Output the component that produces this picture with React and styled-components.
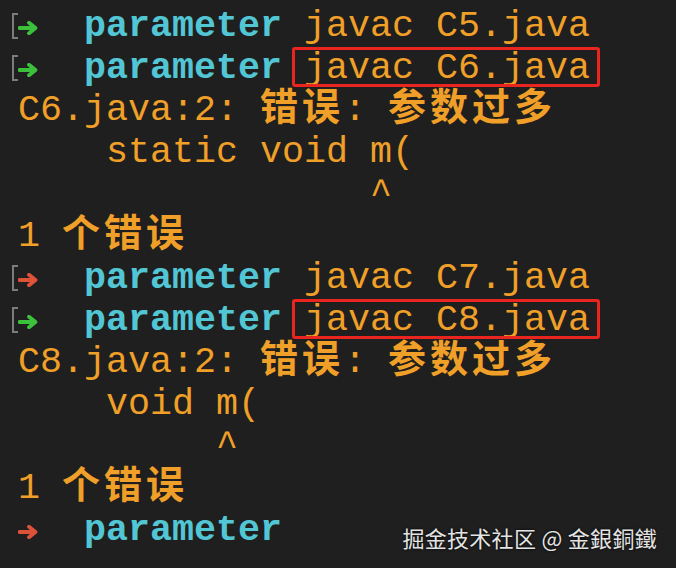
import styled, { createGlobalStyle, css } from "styled-components";

const GlobalStyle = createGlobalStyle`
	html, body {
		margin: 0;
		padding: 0;
		background: #1f1f1f;
	}
`;

const ORANGE = "#f0a028";
const TEAL = "#52c6d4";

function Arrow({ ok }) {
	const color = ok ? "#3cc13c" : "#dd5238";
	return (
		<ArrowSvg viewBox="0 0 22 14" width="22" height="14">
			<path
				d="M1.5 7 H16.5 M11 1.8 L17.5 7 L11 12.2"
				fill="none"
				stroke={color}
				strokeWidth="3.8"
				strokeLinecap="round"
				strokeLinejoin="round"
			/>
		</ArrowSvg>
	);
}

function Prompt({ ok, bracket, cmd, boxed }) {
	return (
		<Line $bracket={bracket}>
			<Arrow ok={ok} />
			{"  "}
			<Dir>parameter</Dir>
			{cmd && " "}
			{cmd && (boxed ? <Boxed>{cmd}</Boxed> : cmd)}
		</Line>
	);
}

function ErrorLine({ file }) {
	return (
		<Line>
			{file}.java:2: <Han>错误</Han>: <Han>参数过多</Han>
		</Line>
	);
}

export default function App() {
	return (
		<>
			<GlobalStyle />
			<Terminal>
				<Prompt ok bracket cmd="javac C5.java" />
				<Prompt ok bracket cmd="javac C6.java" boxed />
				<ErrorLine file="C6" />
				<Line>{"    static void m("}</Line>
				<Line>{"                ^"}</Line>
				<Line>
					1 <Han>个错误</Han>
				</Line>
				<Prompt bracket cmd="javac C7.java" />
				<Prompt ok bracket cmd="javac C8.java" boxed />
				<ErrorLine file="C8" />
				<Line>{"    void m("}</Line>
				<Line>{"         ^"}</Line>
				<Line>
					1 <Han>个错误</Han>
				</Line>
				<Prompt />
				<Watermark>掘金技术社区 @ 金銀銅鐵</Watermark>
			</Terminal>
		</>
	);
}

const Terminal = styled.div`
	position: relative;
	box-sizing: border-box;
	min-height: 100vh;
	padding: 5px 0 0 18px;
	background: #1f1f1f;
	color: ${ORANGE};
	font-family: "Liberation Mono", "Courier New", monospace;
	font-size: 36.66px;
	line-height: 42px;
	white-space: pre;
	overflow: hidden;
`;

const Line = styled.div`
	position: relative;
	height: 42px;

	${(props) =>
		props.$bracket &&
		css`
			&::before {
				content: "";
				position: absolute;
				left: -6px;
				top: 8px;
				width: 4px;
				height: 22px;
				border: 2px solid #7c7c7c;
				border-right: none;
			}
		`}
`;

const ArrowSvg = styled.svg`
	display: inline-block;
	vertical-align: 1px;
`;

const Dir = styled.span`
	color: ${TEAL};
	font-weight: bold;
`;

const Boxed = styled.span`
	position: relative;

	&::after {
		content: "";
		position: absolute;
		left: -12px;
		right: -10px;
		top: 0;
		bottom: 2px;
		border: 3px solid #ea2520;
		border-radius: 3px;
	}
`;

const Han = styled.span`
	font-family: "Noto Sans CJK SC", sans-serif;
	font-size: 38px;
	line-height: 28px;
	font-weight: 700;
	letter-spacing: 4px;
`;

const Watermark = styled.div`
	position: absolute;
	right: 19px;
	bottom: 16px;
	font-family: "Noto Sans CJK SC", "Noto Sans", sans-serif;
	font-size: 22px;
	line-height: 30px;
	color: #e4e4e4;
	text-shadow: 0 0 3px #000;
	letter-spacing: 0.3px;
`;
